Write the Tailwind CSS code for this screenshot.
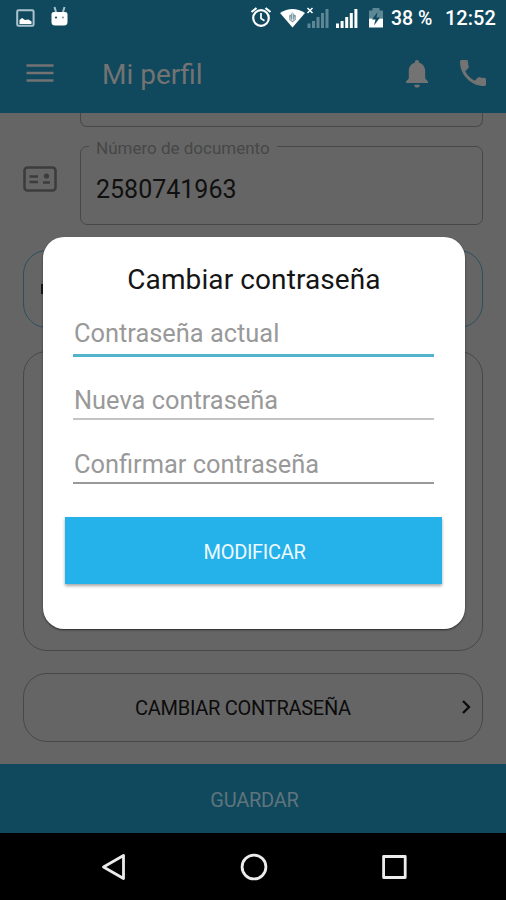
<!DOCTYPE html>
<html lang="es">
<head>
<meta charset="utf-8">
<meta name="viewport" content="width=device-width">
<title>Mi perfil</title>
<script src="https://cdn.jsdelivr.net/npm/@tailwindcss/browser@4"></script>
</head>
<body class="bg-[#656565] font-[Roboto,sans-serif]">
<div class="relative flex h-[900px] w-[506px] flex-col overflow-hidden bg-[#656565]">

  <!-- Status bar -->
  <div class="flex h-9 shrink-0 items-center bg-[#10495d] text-white">
    <svg class="-mt-px ml-4 h-[18px] w-[19px]" viewBox="0 0 19 18"><rect x="1.2" y="1.2" width="16.4" height="15.6" rx="1.4" fill="none" stroke="#a9c4ce" stroke-width="2"/><path d="M3.5 15V11l2.500-2 3 2 3.500-.5 3 2V15z" fill="#fff"/></svg>
    <svg class="-mt-[5px] ml-4 h-5 w-[17px]" viewBox="0 0 17 20"><path d="M3.500 1l1.500 5M13.500 1L12 6" stroke="#a9c4ce" stroke-width="2"/><path d="M0.500 8Q0.500 6 3 6h11q2.500 0 2.500 2v8q0 3.500-3.500 3.500H4Q.5 19.500.5 16z" fill="#fff"/><circle cx="5" cy="11.500" r="1.100" fill="#10495d"/><circle cx="12" cy="11.500" r="1.100" fill="#7f98a1"/></svg>
    <svg class="-mt-[2px] ml-[182px] h-[22px] w-[22px]" viewBox="0 0 22 22"><g fill="none" stroke="#fff"><circle cx="11" cy="12" r="7.800" stroke-width="2.200"/><path d="M1.500 6L6.500 2M20.500 6L15.500 2" stroke-width="2.200"/><path d="M11 7v5.500l3.500 2.300" stroke-width="1.700"/></g></svg>
    <svg class="-mt-px ml-2 h-[22px] w-[51px]" viewBox="0 0 51 22"><path d="M0 6Q12.500-2 25 6L12.500 20.500z" fill="#fff"/><path d="M12.500 4.500l1.500 3 2 1v4l-3.500 3-3.500-3v-4l2-1z" fill="#829ba4"/><path d="M12.500 5v9M10 9.500v2.500l2.500 1.500 2.500-1.500V9.500" stroke="#d8e4e8" fill="none" stroke-width=".8"/><path d="M27.500 1l5 5M32.500 1l-5 5" stroke="#fff" stroke-width="1.500"/><g fill="#5e8796"><path d="M27.500 16.500h3v4.500h-3zM32 14h3v7h-3zM36.500 10h3v11h-3zM41 6h3v15h-3zM45.500 2h3v19h-3z"/></g></svg>
    <svg class="-mt-px ml-[5px] h-[22px] w-[22px]" viewBox="0 0 22 22"><path d="M0 16.500h3v4.500H0zM4.600 14h3v7h-3zM9.200 10h3v11h-3zM13.800 6h3v15h-3zM18.400 2h3v19h-3z" fill="#fff"/></svg>
    <svg class="-mt-px ml-[10px] h-[22px] w-4" viewBox="0 0 16 22"><path d="M4.500 1h7v2.500H15v8H1v-8h3.500z" fill="#5e8796"/><path d="M1 11.500h14v9H1z" fill="#fff"/><path d="M9.500 5L4 12.500h3.500L6 18.500l6-8H8.500z" fill="#10495d"/></svg>
    <span class="ml-[7px] mt-px w-[43px] text-[19.5px] font-medium whitespace-nowrap">38 %</span>
    <span class="ml-[11px] -mt-px text-[20px] font-medium whitespace-nowrap">12:52</span>
  </div>

  <!-- App bar -->
  <header class="flex h-[77px] shrink-0 items-center bg-[#10495d] text-[#737373]">
    <svg class="-mt-1 ml-[26px] h-5 w-7" viewBox="0 0 28 20" stroke="currentColor" stroke-width="2.600"><path d="M.5 2.500h27M.5 10h27M.5 17.500h27"/></svg>
    <h1 class="mt-px ml-12 text-[28px] leading-8">Mi perfil</h1>
    <svg class="-mt-[2px] ml-auto h-7 w-[22px]" viewBox="0 0 22 28" fill="currentColor"><path d="M11 0c1.500 0 2.200 1 2.200 2.800C17.500 4 19.200 7.500 19.200 11v7.500L22 21.500v1.600H0v-1.600l2.800-3V11c0-3.500 1.700-7 6-8.200C8.800 1 9.500 0 11 0zM8.200 24.800h5.600a2.800 2.800 0 0 1-5.600 0z"/></svg>
    <svg class="-mt-[3px] mr-5 ml-8 h-[26px] w-[26px]" viewBox="3 3 18 18" fill="currentColor"><path d="M6.620 10.790c1.440 2.830 3.760 5.140 6.590 6.590l2.200-2.200c.27-.27.67-.36 1.020-.24 1.120.37 2.330.57 3.570.57.55 0 1 .45 1 1V20c0 .55-.45 1-1 1-9.390 0-17-7.610-17-17 0-.55.450-1 1-1h3.500c.55 0 1 .45 1 1 0 1.250.200 2.450.570 3.570.110.350.030.740-.250 1.020l-2.200 2.200z"/></svg>
  </header>

  <!-- Profile form -->
  <main class="flex h-[651px] shrink-0 flex-col px-[23px]">
    <div class="ml-[57px] h-[14px] w-[403px] rounded-b-[7px] border-[1.500px] border-t-0 border-[#484848]"></div>
    <div class="mt-[10px] flex h-[89px]">
      <svg class="mt-[29px] h-[26px] w-[34px]" viewBox="0 0 34 26" fill="none" stroke="#3c3c3c"><rect x="1.500" y="1.500" width="31" height="23" rx="3" stroke-width="2.600"/><path d="M6.500 10.500h8.500M6.500 16h8.500M20 16.500h7" stroke-width="2.300"/><circle cx="23.500" cy="10" r="2.600" fill="#3c3c3c" stroke="none"/></svg>
      <fieldset class="ml-[23px] h-[88px] w-[403px] rounded-[7px] border-[1.500px] border-[#484848] pl-[15px]">
        <legend class="-ml-[7px] h-[18px] px-[7px] text-[17px] leading-[22px] text-[#474747]">Número de documento</legend>
        <div class="mt-[18px] text-[25px] leading-[34px] text-[#101010]">2580741963</div>
      </fieldset>
    </div>
    <div class="mt-[24px] flex h-[78px] shrink-0 items-center rounded-[24px] border-[1.500px] border-[#2b5060] pl-[17px]"><span class="h-[10px] w-1 bg-[#171717]"></span></div>
    <div class="mt-[23px] h-[300px] shrink-0 rounded-[24px] border-[1.500px] border-[#484848]"></div>
    <div class="mt-[22px] flex h-[69px] shrink-0 items-center justify-between rounded-[24px] border-[1.500px] border-[#484848] pr-[10px] pl-[111px] text-[20px] text-[#0c0c0c]">
      <span class="tracking-[-.27px]">CAMBIAR CONTRASEÑA</span>
      <svg class="-mt-px h-4 w-[10px]" viewBox="0 0 10 16" fill="none" stroke="currentColor" stroke-width="2.300"><path d="M1 2l6 6-6 6"/></svg>
    </div>
  </main>

  <div class="flex h-[69px] shrink-0 items-center justify-center bg-[#10495d] pt-[2px] pl-[3px] text-[20px] tracking-[-.25px] text-[#5f747c]">GUARDAR</div>

  <!-- System navigation -->
  <nav class="flex h-[67px] shrink-0 items-center bg-black text-[#ececec]">
    <svg class="ml-[101px] h-7 w-[25px]" viewBox="0 0 25 28" fill="none" stroke="currentColor" stroke-width="2.800" stroke-linejoin="round"><path d="M22.500 2.500v23L2.500 14z"/></svg>
    <svg class="ml-[114px] h-7 w-7" viewBox="0 0 28 28" fill="none" stroke="currentColor" stroke-width="2.800"><circle cx="14" cy="14" r="11.900"/></svg>
    <svg class="ml-[114px] h-6 w-[25px]" viewBox="0 0 25 24" fill="none" stroke="currentColor" stroke-width="2.800" stroke-linejoin="round"><path d="M1.600 1.500h21.600v21H1.600z"/></svg>
  </nav>

  <!-- Change password dialog -->
  <div class="absolute top-[237px] left-[43px] flex h-[392px] w-[422px] flex-col rounded-[21px] bg-white px-[22px] shadow-[0_1px_2px_rgba(0,0,0,.6)]">
    <h2 class="mt-[26px] text-center text-[28px] leading-[34px] tracking-[.1px] text-[#151515]">Cambiar contraseña</h2>
    <div class="mx-2 mt-[16px] h-[44px] w-[361px] border-b-3 border-[#53b2cc] pl-px text-[25.4px] leading-[40px] text-[#999]">Contraseña actual</div>
    <div class="mx-2 mt-[23px] h-[40px] w-[361px] border-b-2 border-[#c4c4c4] pl-px text-[25.4px] leading-[40px] text-[#999]">Nueva contraseña</div>
    <div class="mx-2 mt-[24px] h-[40px] w-[361px] border-b-2 border-[#999] pl-px text-[25.4px] leading-[40px] text-[#999]">Confirmar contraseña</div>
    <button class="mt-[33px] h-[67px] w-[377px] bg-[#25b2eb] pt-[2px] pl-[2px] text-[20px] tracking-[-.3px] text-[#eefaff] shadow-[0_2px_3px_rgba(0,0,0,.35)]">MODIFICAR</button>
  </div>
</div>
</body>
</html>
